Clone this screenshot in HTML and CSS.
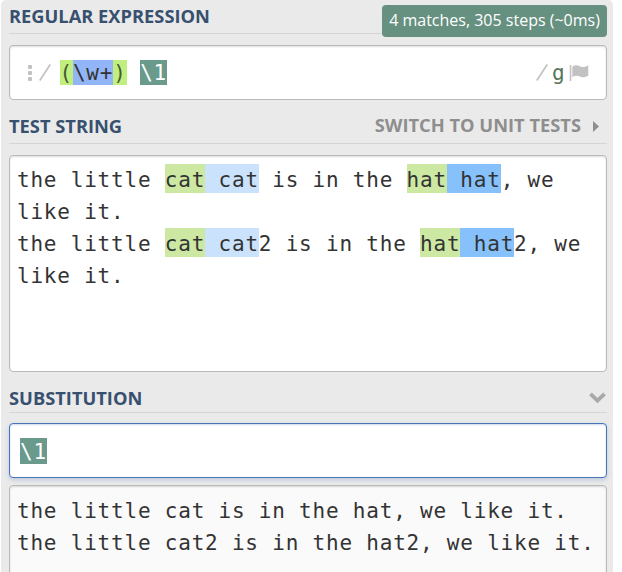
FILE: index.html
```
<!DOCTYPE html>
<html lang="en">
<head>
<meta charset="utf-8">
<title>Regular expression tester</title>
<link rel="stylesheet" href="styles.css">
</head>
<body>
<main class="panel">
  <header class="head head-regex">
    <h2>REGULAR EXPRESSION</h2>
    <span class="badge">4 matches, 305 steps (~0ms)</span>
  </header>
  <section class="box regex">
    <svg class="dots" width="6" height="18" viewBox="0 0 6 18"><g fill="#c2c2c2"><rect x="1" y="1" width="4" height="4" rx="1"/><rect x="1" y="7" width="4" height="4" rx="1"/><rect x="1" y="13" width="4" height="4" rx="1"/></g></svg>
    <svg class="slash" width="12" height="17" viewBox="0 0 12 17"><path d="M.8 16.5 11.2.5" stroke="#c2c2c2" stroke-width="1.7"/></svg>
    <code class="pattern"><span class="paren">(</span><span class="token">\w+</span><span class="paren">)</span> <span class="ref">\1</span></code>
    <svg class="slash slash-end" width="12" height="17" viewBox="0 0 12 17"><path d="M.8 16.5 11.2.5" stroke="#c2c2c2" stroke-width="1.7"/></svg>
    <span class="flags">g</span>
    <svg class="flag" width="20" height="18" viewBox="0 0 20 18"><path d="M1.5 1v16" stroke="#c2c2c2" stroke-width="1.6"/><path d="M3.3 2.8C8-.2 9.700 2.200 12 2.800 14.500 3.500 17 2.600 19.300 1.500V11.800C17 13 14.500 13.800 11.500 12.700 8.500 11.500 6.500 11.500 3.300 13.300Z" fill="#c2c2c2"/></svg>
  </section>
  <header class="head head-test">
    <h2>TEST STRING</h2>
    <span class="switch">SWITCH TO UNIT TESTS</span>
    <svg class="caret" width="6" height="11" viewBox="0 0 6 11"><path d="M0 0 6 5.500 0 11Z" fill="#8e8e8e"/></svg>
  </header>
  <section class="box text test">
    <div class="line">the little <span class="group">cat</span><span class="match-a"> cat</span> is in the <span class="group">hat</span><span class="match-b"> hat</span>, we</div>
    <div class="line">like it.</div>
    <div class="line">the little <span class="group">cat</span><span class="match-a"> cat</span>2 is in the <span class="group">hat</span><span class="match-b"> hat</span>2, we</div>
    <div class="line">like it.</div>
  </section>
  <header class="head head-sub">
    <h2>SUBSTITUTION</h2>
    <svg class="chevron" width="17" height="12" viewBox="0 0 17 12"><path d="m1.500 1.800 7 6.800 7-6.800" fill="none" stroke="#a9a9a9" stroke-width="3.800"/></svg>
  </header>
  <section class="box replace"><code class="ref">\1</code></section>
  <section class="box text result">
    <div class="line">the little cat is in the hat, we like it.</div>
    <div class="line">the little cat2 is in the hat2, we like it.</div>
  </section>
</main>
</body>
</html>
```
FILE: styles.css
```
* { box-sizing: border-box; }
body { margin: 0; width: 622px; height: 572px; overflow: hidden; background: #fff; font-family: "Open Sans", sans-serif; }
.panel { width: 612px; height: 572px; margin-left: 1px; padding: 0 6px 0 8px; background: #eaeaea; border-radius: 5px 5px 0 0; overflow: hidden; display: flex; flex-direction: column; }
svg { display: block; flex: none; }
.head { flex: none; display: flex; align-items: center; border-bottom: 1px solid #d5d5d5; }
h2, .switch { margin: 0; font-size: 18.300px; line-height: 24px; font-weight: 700; color: #38506f; white-space: nowrap; }
.head-regex { height: 45px; border: 0; align-items: flex-start; }
.head-regex h2 { height: 34px; flex: 1; padding-top: 4px; border-bottom: 1px solid #d5d5d5; }
.badge { width: 225px; height: 32px; margin-top: 5px; background: #669180; border-radius: 4px; color: #fff; font-size: 16px; line-height: 31px; text-align: center; white-space: nowrap; }
.box { flex: none; background: #fff; border: 1px solid #b9b9b9; border-radius: 4px; box-shadow: inset 0 1px 2px #0002; }
.regex { height: 55px; display: flex; align-items: center; padding: 0 17px; }
code, .text, .flags { font-family: "DejaVu Sans Mono", monospace; font-size: 21px; letter-spacing: 0.790px; color: #333; }
.dots { margin-right: 6px; }
.slash { margin-right: 8.500px; }
.pattern { line-height: 27px; height: 25px; white-space: pre; }
.pattern span { display: inline-block; height: 25px; }
.pattern .paren { background: #c0ef7f; color: #465b32; }
.token { background: #91b5f7; }
.ref, .pattern .ref { background: #6a9a8c; color: #fff; }
.slash-end { margin: 0 4px 0 auto; }
.flags { width: 16px; height: 25px; line-height: 27px; color: #58765a; }
.flag { margin-left: 1px; }
.head-test { height: 44px; padding-top: 8px; }
.switch { margin-left: auto; padding-bottom: 1px; color: #8e8e8e; }
.caret { margin: 1px 8px 0 12px; }
.text { padding: 8px 7px; }
.line { height: 32px; line-height: 33px; white-space: pre; }
.line span { display: inline-block; height: 29px; line-height: 33px; }
.test { height: 217px; margin-top: 11px; }
.group { background: #cde8a3; }
.match-a { background: #cbe2fc; }
.match-b { background: #86c1fb; }
.head-sub { height: 41px; padding-top: 11px; }
.chevron { margin-left: auto; margin-right: 1px; }
.replace { height: 55px; margin-top: 10px; padding: 14px 10px; border-color: #4875b8; box-shadow: 0 2px 4px #4875b844, inset 0 1px 2px #4875b844; }
.replace .ref { display: inline-block; height: 26px; line-height: 28px; }
.result { height: 100px; margin-top: 7px; padding-top: 9px; background: #fafafa; }
```
